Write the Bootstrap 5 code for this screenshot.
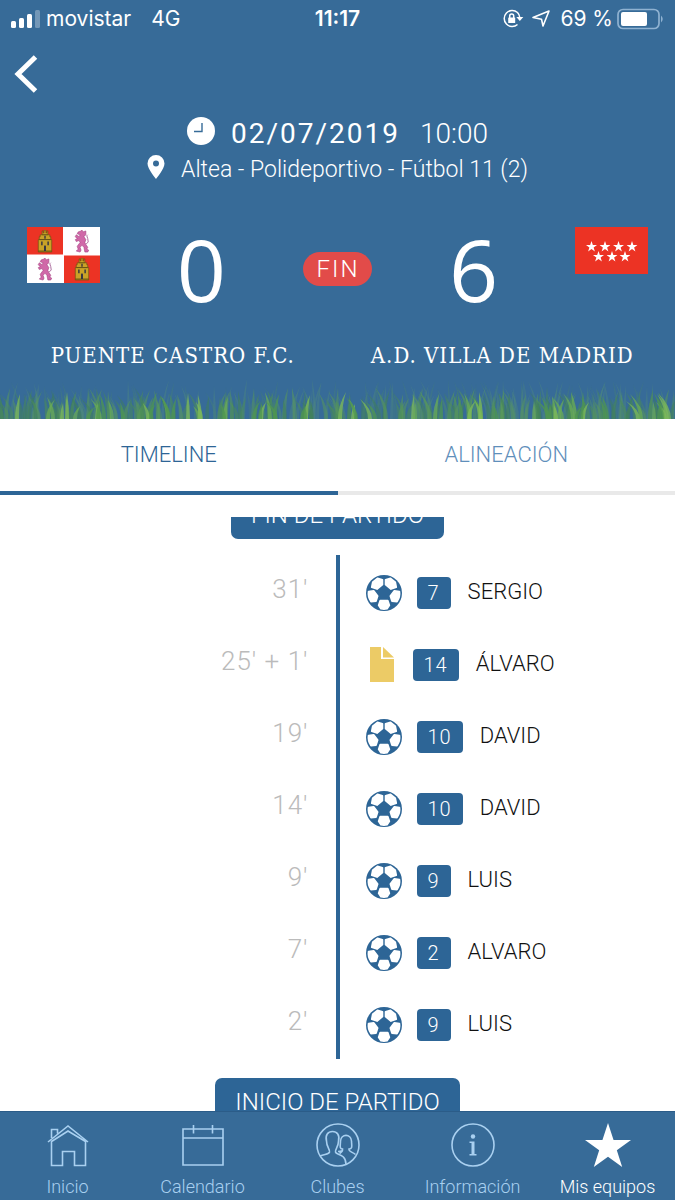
<!DOCTYPE html>
<html lang="es">
<head>
<meta charset="utf-8">
<meta name="viewport" content="width=device-width, initial-scale=1">
<title>Puente Castro F.C. - A.D. Villa de Madrid</title>
<link rel="stylesheet" href="https://cdn.jsdelivr.net/npm/bootstrap@5.3.0/dist/css/bootstrap.min.css">
<style>
  :root { --sky: #376b98; --deep: #2d6596; --pale: #a9d0f0; }
  body { font-family: Roboto, "Liberation Sans", sans-serif; font-weight: 300; color: #111; }
  svg { display: block; flex: none; }
  .match-head, .tabbar { background: var(--sky); color: #fff; }
  .status { font: 400 21px/24px Inter, "Liberation Sans", sans-serif; padding: 7px 10px 0 10px; }
  .status > * { flex: 1 1 0; }
  .clock { font-weight: 600; }
  .back { margin: 22px 0 0 12px; }
  .when { font-size: 28px; line-height: 32px; margin-top: 22px; }
  .when .date { font-weight: 400; letter-spacing: 2px; }
  .place { font-size: 23px; line-height: 28px; margin-top: 4px; }
  .scores { padding: 0 27px; margin-top: 38px; }
  .goals { font: 400 86px/92px "Open Sans", "Noto Sans", sans-serif; }
  .flag { padding-top: 4px; }
  .state { background: #e24b49; font-size: 24px; font-weight: 350; line-height: 34px; letter-spacing: 2px; padding: 0 13px 0 14px; }
  .teams { font: 400 22px/32px "DejaVu Serif Condensed", "DejaVu Serif", serif; letter-spacing: 1px; padding: 0 8px; margin-top: 25px; }
  .grass { width: 100%; height: 40px; margin-top: 7px; }
  .tabs-row .tab-btn { border: 0; border-bottom: 4px solid #e9e9e9; background: #fff; color: #5f8fbb; font-size: 22px; font-weight: 300; line-height: 72px; padding: 0; }
  .tabs-row .tab-btn.active { border-color: var(--deep); color: var(--deep); }
  .timeline { margin-top: 22px; min-height: 0; overflow-y: auto; scrollbar-width: none; }
  .timeline::-webkit-scrollbar { display: none; }
  .milestone { background: var(--deep); color: #fff; border-radius: 7px; font-size: 24px; line-height: 48px; padding: 0 20px; }
  .event { height: 72px; }
  .minute { flex: 0 0 50%; color: #bbb; font-size: 26px; line-height: 68px; letter-spacing: 1px; padding-right: 29px; text-align: right; }
  .detail { flex: 0 0 50%; border-left: 4px solid var(--deep); margin-left: -2px; padding-left: 26px; }
  .events { padding: 16px 0 19px; }
  .shirt { background: var(--deep); color: #fff; border-radius: 4px; font-size: 20px; font-weight: 350; line-height: 32px; letter-spacing: 1px; padding: 0 11px; margin: 4px 17px 0 15px; }
  .event svg { margin-top: 4px; }
  .player { font-size: 22px; }
  .tabbar { border-top: 1px solid #2b5c88; padding: 9px 0 0; height: 89px; }
  .tabbar a { flex: 1 1 0; color: var(--pale); font-size: 18px; line-height: 28px; }
  .tabbar a.active { color: #fff; }
  .tabbar svg { margin-bottom: 4px; }
</style>
</head>
<body>
<svg width="0" height="0" class="position-absolute" aria-hidden="true">
  <defs>
    <symbol id="ball" viewBox="0 0 36 36">
      <circle cx="18" cy="18" r="18" fill="#2d6596"/>
      <g fill="#fff" stroke="#fff" stroke-width="1.800" stroke-linejoin="round">
        <path d="M6.800 7.200L11.500 3.400L16.400 4.800L16.400 9.600L11 14L5.800 12.200Z"/>
        <path d="M29.200 7.200L24.500 3.400L19.600 4.800L19.600 9.600L25 14L30.200 12.200Z"/>
        <path d="M2.600 16.700L7.600 15.800L11.600 21L10 26L5 26.500C3 23.600 2 20.500 2.600 16.700Z"/>
        <path d="M33.400 16.700L28.400 15.800L24.400 21L26 26L31 26.500C33 23.600 34 20.500 33.400 16.700Z"/>
        <path d="M14.300 25.600H21.700L23.300 30.200L21 33.700Q18 34.500 15 33.700L12.700 30.200Z"/>
      </g>
    </symbol>
    <symbol id="castle" viewBox="0 0 16 24">
      <path d="M1 23V10H2V7H3V5H5V1H6V3H7V0H9V3H10V1H11V5H13V7H14V10H15V23Z" fill="#c9a227" stroke="#6b5410" stroke-width=".7"/>
      <path d="M1 22H15M2 10H14M5 5H11" stroke="#5c4a14" stroke-width="1"/>
      <path d="M7 22V17Q8 15 9 17V22ZM4 12H5.500V16H4ZM10.500 12H12V16H10.500ZM7.300 6H8.700V9H7.300Z" fill="#334"/>
    </symbol>
    <symbol id="lion" viewBox="0 0 16 24">
      <path d="M4 2L7 1L8 0L9 2L12 1L12 5L10 7L12 10L11 13L12 15L14 18L13 20L15 21L14 23H11L10 18L8 16L6 18L7 21L6 23L2 22L4 20L3 17L6 13L5 11L2 12L1 10L3 9L1 7L2 5L5 7L6 5L3 4Z" fill="#d068a8" stroke="#a33f7d" stroke-width=".6"/>
      <path d="M12 15Q16 13 14 9T14 5" fill="none" stroke="#a96a9c" stroke-width="1"/>
    </symbol>
    <symbol id="star" viewBox="0 0 24 24">
      <path d="M12 0L14.900 8.900H24L16.600 14.200L19.400 23L12 17.600L4.600 23L7.400 14.200L0 8.900H9.100Z" fill="#fff"/>
    </symbol>
  </defs>
</svg>

<div class="d-flex flex-column vh-100 overflow-hidden">
  <header class="match-head">
    <div class="status d-flex align-items-center">
      <div class="d-flex align-items-center">
        <svg width="32" height="20" viewBox="0 0 32 20" fill="#fff" class="me-1"><rect x="1" y="12" width="5" height="7" rx="1.500"/><rect x="9" y="9" width="5" height="10" rx="1.500"/><rect x="17" y="5" width="5" height="14" rx="1.500"/><rect x="25" y="1" width="5" height="18" rx="1.500" opacity=".3"/></svg>
        <span>movistar</span><span class="ms-3 ps-1">4G</span>
      </div>
      <div class="clock text-center">11:17</div>
      <div class="d-flex align-items-center justify-content-end">
        <svg width="22" height="20" viewBox="0 0 22 20" fill="none" stroke="#fff" stroke-width="1.500" class="me-2"><path d="M15.500 3.500A8 8 0 1 0 15.500 15.500M15.500 3.500Q17.500 5.500 17.800 8.500"/><path d="M14.300 8H21.300L17.800 12Z" fill="#fff" stroke="none"/><rect x="6.200" y="8.500" width="7" height="5.500" rx=".6" fill="#fff" stroke="none"/><path d="M7.700 9V7A2 2 0 0 1 11.700 7V9"/></svg>
        <svg width="20" height="20" viewBox="0 0 20 20" fill="none" stroke="#fff" stroke-width="1.600" stroke-linejoin="round" class="me-2"><path d="M17 2L11 17L9.500 10.200L1 8.500Z"/></svg>
        <span class="text-nowrap">69 %</span>
        <svg width="48" height="22" viewBox="0 0 48 22" class="ms-1"><rect x="1" y="1.500" width="41" height="19" rx="5" fill="none" stroke="#8fb2d1" stroke-width="1.700"/><rect x="4" y="4" width="26" height="14" rx="2" fill="#fff"/><path d="M44 7.500Q47.500 11 44 14.500Z" fill="#8fb2d1"/></svg>
      </div>
    </div>
    <button type="button" class="back btn p-0 border-0 d-block" aria-label="Volver">
      <svg width="28" height="42" viewBox="0 0 28 42" fill="none" stroke="#fff" stroke-width="5"><path d="M23.500 4L6 21L23.500 38"/></svg>
    </button>
    <div class="when d-flex justify-content-center align-items-center">
      <svg width="28" height="34" viewBox="0 0 28 34" class="me-3"><circle cx="14" cy="14" r="14" fill="#fff"/><path d="M15 6V14.500H7" fill="none" stroke="#376b98" stroke-width="1.400"/></svg>
      <span class="date">02/07/2019</span><span class="ms-3 ps-1">10:00</span>
    </div>
    <div class="place d-flex justify-content-center align-items-center">
      <svg width="18" height="30" viewBox="0 0 18 30" class="me-3"><path fill="#fff" fill-rule="evenodd" d="M9 0A8.500 8.500 0 0 1 17.500 8.500C17.500 14 9 24 9 24S.5 14 .5 8.500A8.500 8.500 0 0 1 9 0ZM9 5.500A3 3 0 1 0 9 11.500A3 3 0 1 0 9 5.500Z"/></svg>
      <span>Altea - Polideportivo - Fútbol 11 (2)</span>
    </div>
    <div class="scores d-flex justify-content-between align-items-start">
      <div class="flag">
        <svg width="73" height="56" viewBox="0 0 73 56"><path d="M0 0H73V56H0Z" fill="#fff"/><path d="M0 0H36V27.500H0ZM37 28.500H73V56H37Z" fill="#ec3324"/><use href="#castle" x="10" y="3" width="16" height="23"/><use href="#castle" x="47" y="31" width="16" height="23"/><use href="#lion" x="47" y="3" width="16" height="23"/><use href="#lion" x="10" y="31" width="16" height="23"/></svg>
      </div>
      <div class="goals">0</div>
      <div class="state rounded-pill align-self-center">FIN</div>
      <div class="goals">6</div>
      <div class="flag">
        <svg width="73" height="47" viewBox="0 0 73 47"><path d="M0 0H73V47H0Z" fill="#ec3324"/><use href="#star" x="11" y="14" width="11" height="11"/><use href="#star" x="24.500" y="14" width="11" height="11"/><use href="#star" x="38" y="14" width="11" height="11"/><use href="#star" x="51.500" y="14" width="11" height="11"/><use href="#star" x="18" y="24" width="11" height="11"/><use href="#star" x="31.500" y="24" width="11" height="11"/><use href="#star" x="44.500" y="24" width="11" height="11"/></svg>
      </div>
    </div>
    <div class="teams d-flex text-center">
      <div class="w-50">PUENTE CASTRO F.C.</div>
      <div class="w-50">A.D. VILLA DE MADRID</div>
    </div>
    <svg class="grass" id="grass" viewBox="0 0 675 40" preserveAspectRatio="none" aria-hidden="true"></svg>
  </header>

  <div class="tabs-row d-flex" role="tablist">
    <button type="button" role="tab" aria-selected="true" class="tab-btn active w-50">TIMELINE</button>
    <button type="button" role="tab" aria-selected="false" class="tab-btn w-50">ALINEACIÓN</button>
  </div>

  <main class="timeline flex-grow-1" id="timeline">
    <div class="d-flex justify-content-center"><div class="milestone">FIN DE PARTIDO</div></div>
    <div class="events">
      <div class="event d-flex"><div class="minute">31'</div><div class="detail d-flex align-items-center"><svg width="36" height="36"><use href="#ball"/></svg><span class="shirt">7</span><span class="player">SERGIO</span></div></div>
      <div class="event d-flex"><div class="minute">25' + 1'</div><div class="detail d-flex align-items-center"><svg width="32" height="36" viewBox="0 0 32 36"><path d="M4 0H15V12H28V35H4Z" fill="#eccb66"/><path d="M17 0L28 10.500H17Z" fill="#eccb66"/></svg><span class="shirt">14</span><span class="player">ÁLVARO</span></div></div>
      <div class="event d-flex"><div class="minute">19'</div><div class="detail d-flex align-items-center"><svg width="36" height="36"><use href="#ball"/></svg><span class="shirt">10</span><span class="player">DAVID</span></div></div>
      <div class="event d-flex"><div class="minute">14'</div><div class="detail d-flex align-items-center"><svg width="36" height="36"><use href="#ball"/></svg><span class="shirt">10</span><span class="player">DAVID</span></div></div>
      <div class="event d-flex"><div class="minute">9'</div><div class="detail d-flex align-items-center"><svg width="36" height="36"><use href="#ball"/></svg><span class="shirt">9</span><span class="player">LUIS</span></div></div>
      <div class="event d-flex"><div class="minute">7'</div><div class="detail d-flex align-items-center"><svg width="36" height="36"><use href="#ball"/></svg><span class="shirt">2</span><span class="player">ALVARO</span></div></div>
      <div class="event d-flex"><div class="minute">2'</div><div class="detail d-flex align-items-center"><svg width="36" height="36"><use href="#ball"/></svg><span class="shirt">9</span><span class="player">LUIS</span></div></div>
    </div>
    <div class="d-flex justify-content-center pb-4"><div class="milestone">INICIO DE PARTIDO</div></div>
  </main>

  <nav class="tabbar d-flex text-center">
    <a href="#" class="text-decoration-none"><svg class="mx-auto" width="48" height="48" viewBox="0 0 48 48" fill="none" stroke="currentColor" stroke-width="1.600"><path d="M4 21L24 5L44 21M7.500 20.500V44.500H18.500V30.500H30.500V44.500H41.500V20.500L24 10ZM7.500 17V8.500H13.500V12.500"/></svg>Inicio</a>
    <a href="#" class="text-decoration-none"><svg class="mx-auto" width="48" height="48" viewBox="0 0 48 48" fill="none" stroke="currentColor" stroke-width="1.600"><path d="M4 8H44V44H4ZM4 17H44M14.500 4V12.500M33.500 4V12.500"/></svg>Calendario</a>
    <a href="#" class="text-decoration-none"><svg class="mx-auto" width="48" height="48" viewBox="0 0 48 48" fill="none" stroke="currentColor" stroke-width="1.600"><circle cx="24" cy="24" r="21"/><path d="M6 35C11 33 15 33.500 15.500 31C16 28 12.500 26 12.500 20C11 14 14 10.500 18.500 10.500S26 14 24.500 20C24.500 26 21 28 21.500 31C22 34 32 32.500 32 43.500"/><path d="M24 30.500C27 30.500 29 30 28.500 28C25 28 26.500 24 26.500 20C27 12.500 37 12.500 37.500 20C37.500 24 39 28 35 28C34.500 31 39 31 41.500 33.500M28.500 28C29 31 27 31.500 25.500 32.500"/></svg>Clubes</a>
    <a href="#" class="text-decoration-none"><svg class="mx-auto" width="48" height="48" viewBox="0 0 48 48" fill="none" stroke="currentColor" stroke-width="1.600"><circle cx="24" cy="24" r="21"/><circle cx="24" cy="15.500" r="2.200" fill="currentColor" stroke="none"/><path d="M20.500 20.500H25.500V33H27.500V34.500H20.500V33H22.500V22H20.500Z" fill="currentColor" stroke="none"/></svg>Información</a>
    <a href="#" class="active text-decoration-none"><svg class="mx-auto" width="48" height="48" viewBox="0 0 48 48"><use href="#star" x="1" y="2" width="46" height="46"/></svg>Mis equipos</a>
  </nav>
</div>

<script src="https://cdn.jsdelivr.net/npm/bootstrap@5.3.0/dist/js/bootstrap.bundle.min.js"></script>
<script>
  // Grass strip: faint tall blades behind, bright short ones in front.
  let seed = 7;
  const rnd = () => (seed = (seed * 16807) % 2147483647) / 2147483647;
  const layers = [
    { n: 200, h: [22, 40], w: 3, o: 0.28, c: ['#4d8a6a', '#5b9673'] },
    { n: 170, h: [16, 32], w: 4, o: 0.5, c: ['#3f7f58', '#4a8c56', '#5a9a58'] },
    { n: 75, h: [12, 28], w: 4, o: 0.75, c: ['#6aab55', '#7dba58', '#4f9650'] }
  ];
  let blades = '';
  for (const l of layers) for (let i = 0; i < l.n; i++) {
    const x = Math.round(rnd() * 675), h = Math.round(l.h[0] + rnd() * (l.h[1] - l.h[0]));
    const t = Math.round((rnd() - 0.5) * 20), c = l.c[Math.floor(rnd() * l.c.length)];
    blades += `<path d="M${x} 40Q${x} ${40 - h / 2} ${x + t} ${40 - h}Q${x + l.w} ${40 - h / 2} ${x + l.w} 40Z" fill="${c}" opacity="${l.o}"/>`;
  }
  document.getElementById('grass').innerHTML = blades;
  // Open with the list scrolled part of the way past the final whistle.
  document.getElementById('timeline').scrollTop = 26;
</script>
</body>
</html>
